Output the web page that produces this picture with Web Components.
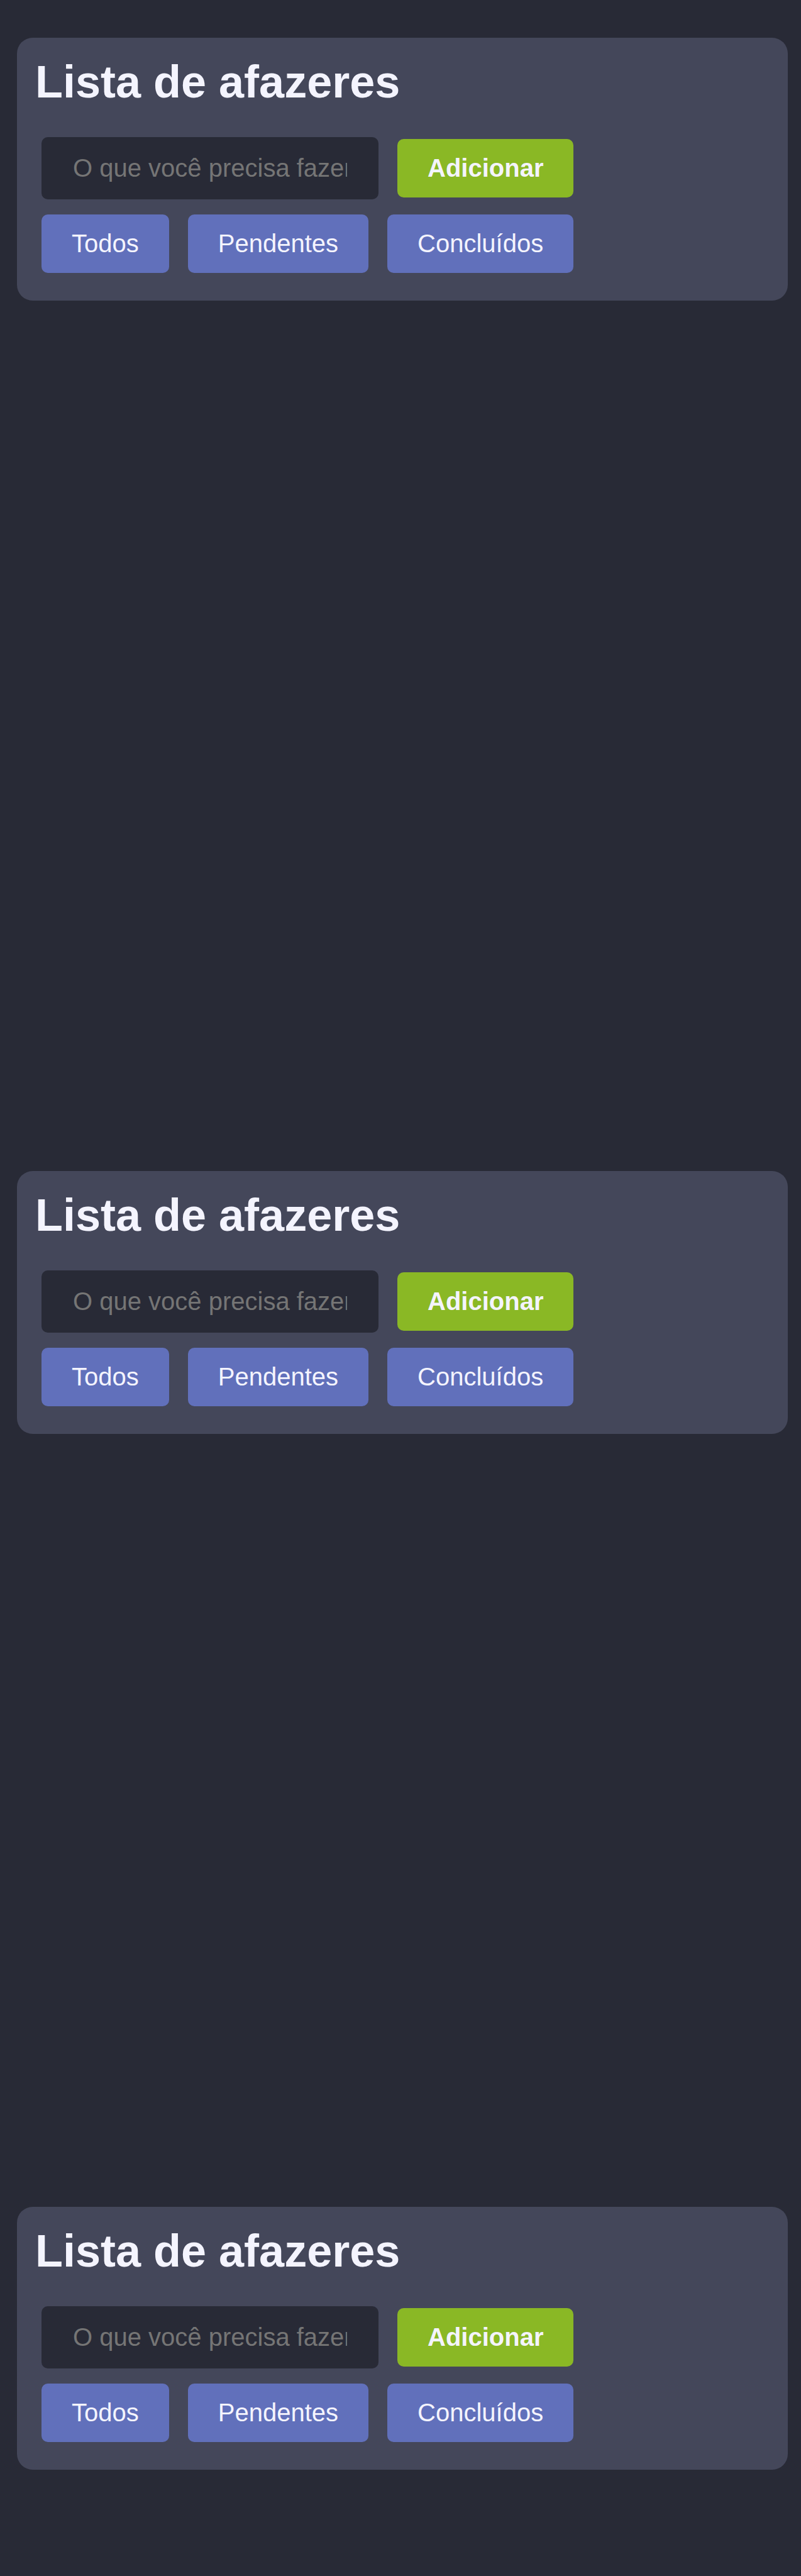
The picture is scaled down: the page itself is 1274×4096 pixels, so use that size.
<!DOCTYPE html>
<html lang="pt-BR">
<head>
<meta charset="utf-8">
<meta name="viewport" content="width=device-width, initial-scale=1">
<title>Lista de afazeres</title>
<style>
  html { background: #282a36; }
  body {
    margin: 0;
    min-height: 100vh;
    box-sizing: border-box;
    padding: 60px 21px 168px 27px;
    color: #f4f4fe;
    font: 40px/46px "Liberation Sans", Arial, sans-serif;
    display: flex;
    flex-direction: column;
  }
  .long { margin-bottom: 1384px; }
  .short { margin-bottom: 1229px; }
</style>
</head>
<body>
  <todo-panel class="long" heading="Lista de afazeres"></todo-panel>
  <todo-panel class="short" heading="Lista de afazeres"></todo-panel>
  <todo-panel heading="Lista de afazeres"></todo-panel>

<script>
class TodoButton extends HTMLElement {
  constructor() {
    super();
    this.attachShadow({ mode: 'open' }).innerHTML = `
      <style>
        :host { display: block; --fill: #6170bb; }
        :host([primary]) { --fill: #8ab825; font-weight: bold; }
        button {
          display: block;
          margin: 0;
          padding: 23px 48px 24px;
          border: 0;
          border-radius: 10px;
          background: var(--fill);
          color: inherit;
          font: inherit;
          white-space: nowrap;
          cursor: pointer;
        }
      </style>
      <button type="button"><slot></slot></button>`;
  }
}
customElements.define('todo-button', TodoButton);

class TodoInput extends HTMLElement {
  constructor() {
    super();
    this.attachShadow({ mode: 'open' }).innerHTML = `
      <style>
        :host { display: block; width: 536px; }
        input {
          display: block;
          box-sizing: border-box;
          width: 100%;
          height: 99px;
          margin: 0;
          padding: 0 50px;
          border: 0;
          border-radius: 10px;
          background: #282a36;
          color: inherit;
          font: inherit;
        }
        input::placeholder { color: #757575; opacity: 1; }
      </style>
      <input type="text">`;
  }
  connectedCallback() {
    const input = this.shadowRoot.querySelector('input');
    input.placeholder = this.getAttribute('placeholder');
    input.setAttribute('aria-label', this.getAttribute('placeholder'));
  }
}
customElements.define('todo-input', TodoInput);

class TodoPanel extends HTMLElement {
  constructor() {
    super();
    this.attachShadow({ mode: 'open' }).innerHTML = `
      <style>
        :host {
          display: block;
          padding: 30px 29px 44px;
          border-radius: 25px;
          background: #44475a;
        }
        h1 {
          margin: 0 0 47px;
          font-size: 72px;
          line-height: 81px;
          font-weight: bold;
        }
        .rows {
          display: flex;
          flex-direction: column;
          gap: 24px;
          padding: 0 10px;
        }
        .row { display: flex; align-items: center; gap: 30px; }
      </style>
      <h1></h1>
      <div class="rows">
        <div class="row">
          <todo-input placeholder="O que você precisa fazer?"></todo-input>
          <todo-button primary>Adicionar</todo-button>
        </div>
        <div class="row">
          <todo-button>Todos</todo-button>
          <todo-button>Pendentes</todo-button>
          <todo-button>Concluídos</todo-button>
        </div>
      </div>`;
  }
  connectedCallback() {
    this.shadowRoot.querySelector('h1').textContent = this.getAttribute('heading');
  }
}
customElements.define('todo-panel', TodoPanel);
</script>
</body>
</html>
